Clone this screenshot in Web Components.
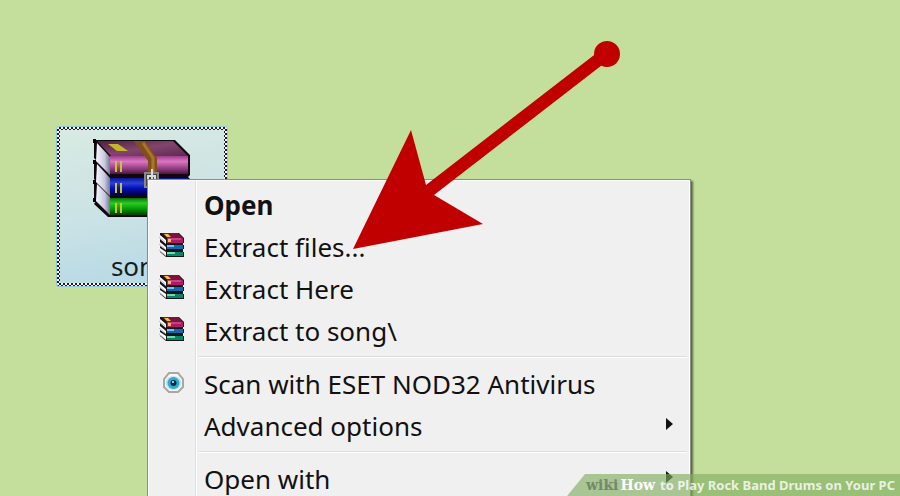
<!DOCTYPE html>
<html lang="en">
<head>
<meta charset="utf-8">
<title>How to Play Rock Band Drums on Your PC</title>
<style>
	html, body{
		height: 100%;
		margin: 0;
	}
	body{
		overflow: hidden;
		background: #c4df9b;
		font-family: "Noto Sans", "Open Sans", sans-serif;
	}
</style>
</head>
<body>

<desk-top>
	<desktop-icon name="song"></desktop-icon>

	<context-menu>
		<menu-entry default>Open</menu-entry>
		<menu-entry icon="books">Extract files...</menu-entry>
		<menu-entry icon="books">Extract Here</menu-entry>
		<menu-entry icon="books">Extract to song\</menu-entry>
		<menu-separator></menu-separator>
		<menu-entry icon="eye">Scan with ESET NOD32 Antivirus</menu-entry>
		<menu-entry submenu>Advanced options</menu-entry>
		<menu-separator></menu-separator>
		<menu-entry submenu>Open with</menu-entry>
	</context-menu>

	<pointer-arrow></pointer-arrow>

	<title-strip>
		<span slot="brand">wiki</span>
		<span slot="how">How</span>
		to Play Rock Band Drums on Your PC
	</title-strip>
</desk-top>

<script>
(function(d){

	const makeTemplate = html => {
		const template = d.createElement('template');
		template.innerHTML = html;
		return template;
	};

	const attach = (element, template) => {
		element.attachShadow({ mode: 'open' });
		element.shadowRoot.appendChild(template.content.cloneNode(true));
	};

	//////////////////////
	// desktop

	const desktopTemplate = makeTemplate(`
	<style>
		:host{
			display: block;
			position: relative;
			height: 100%;
			overflow: hidden;
		}
	</style>
	<slot></slot>
	`);

	class DeskTop extends HTMLElement{
		constructor(){
			super();
			attach(this, desktopTemplate);
		}
	}

	//////////////////////
	// selected archive on the desktop

	const iconTemplate = makeTemplate(`
	<style>
		:host{
			display: block;
			position: absolute;
			left: 56px;
			top: 126px;
			width: 172px;
		}
		.tile{
			display: block;
			box-sizing: border-box;
			width: 100%;
			padding: 3px;
			border: 1px solid #9cc3dc;
			border-radius: 3px;
			background: repeating-conic-gradient(#1c1c24 0 25%, #f4f8fa 0 50%) 0 0 / 4px 4px;
			font: inherit;
			color: #111c24;
		}
		.inner{
			display: flex;
			flex-direction: column;
			align-items: center;
			gap: 30px;
			padding: 9px 2px 0 0;
			background: linear-gradient(170deg, #d8eae2, #cbe3e5 50%, #b4d7e6);
		}
		svg{
			display: block;
			width: 100px;
			height: 80px;
		}
		.name{
			font-size: 26px;
			line-height: 34px;
		}
	</style>
	<button class="tile" type="button">
		<span class="inner">
			<svg viewBox="0 0 100 80" aria-hidden="true">
				<defs>
					<linearGradient id="plum" x2="0" y2="1"><stop offset="0" stop-color="#a03c8c"/><stop offset=".3" stop-color="#d878c0"/><stop offset=".6" stop-color="#a54a92"/><stop offset="1" stop-color="#4a1740"/></linearGradient>
					<linearGradient id="blue" x2="0" y2="1"><stop offset="0" stop-color="#0a1690"/><stop offset=".3" stop-color="#2a42dc"/><stop offset=".6" stop-color="#0510b4"/><stop offset="1" stop-color="#000048"/></linearGradient>
					<linearGradient id="green" x2="0" y2="1"><stop offset="0" stop-color="#067006"/><stop offset=".3" stop-color="#30c828"/><stop offset=".6" stop-color="#04a404"/><stop offset="1" stop-color="#023c02"/></linearGradient>
					<linearGradient id="paper"><stop offset="0" stop-color="#f8f8ff"/><stop offset=".6" stop-color="#c9c9e0"/><stop offset="1" stop-color="#77778e"/></linearGradient>
					<linearGradient id="cover" x2="1" y2="1"><stop offset="0" stop-color="#4d203f"/><stop offset=".5" stop-color="#82456d"/><stop offset="1" stop-color="#5d2950"/></linearGradient>
				</defs>
				<path d="M3 1H84L99 16V36L97 38L99 40V78H17L3 65L5 62L3 60V45L5 42L3 40V24L5 21L3 19Z" fill="#11070f"/>
				<path d="M6 4 19 18V36L5 22Z" fill="url(#paper)"/>
				<path d="M6 25 19 39V57L5 43Z" fill="url(#paper)"/>
				<path d="M6 45 19 58V76L5 62Z" fill="url(#paper)"/>
				<path d="M6 2H82L97 17H20Z" fill="url(#cover)"/>
				<path d="M19 17H97V35H19Z" fill="url(#plum)"/>
				<path d="M19 39H97V56H19Z" fill="url(#blue)"/>
				<path d="M19 59H97V76H19Z" fill="url(#green)"/>
				<path d="M17 5H27L37 12H26Z" fill="#c5b52b"/>
				<path d="M43 2H54L66 19V36H57V22Z" fill="#80501b"/>
				<path d="M52 4 62 19V34" fill="none" stroke="#a8752c" stroke-width="3"/>
				<path d="M25 22V33M30 22V33M25 44V54M30 44V54M25 64V74M30 64V74" stroke="#ccc42b" stroke-width="2"/>
				<path d="M54 34H67V48H54Z" fill="#444" stroke="#888" stroke-width="2"/>
				<path d="M57 47V37H64V47M61 30V40" fill="none" stroke="#ddd" stroke-width="2"/>
				<path d="M2 2H5M2 23H5M2 43H5M2 61H5" stroke="#000" stroke-width="4"/>
			</svg>
			<span class="name"></span>
		</span>
	</button>
	`);

	class DesktopIcon extends HTMLElement{
		constructor(){
			super();
			attach(this, iconTemplate);
		}

		connectedCallback(){
			this.shadowRoot.querySelector('.name').textContent = this.getAttribute('name');
		}
	}

	//////////////////////
	// context menu

	const menuTemplate = makeTemplate(`
	<style>
		:host{
			display: block;
			position: absolute;
			left: 147px;
			right: 209px;
			top: 179px;
			box-sizing: border-box;
			padding: 5px 3px 8px 1px;
			border: 1px solid #8b8d8a;
			background: linear-gradient(90deg, transparent 47px, #dedede 47px 48px, #fff 48px 49px, transparent 49px) #f0f0f0;
			box-shadow: inset 1px 1px #fafafa, inset -1px 0 #fff, 2px 2px 2px #55683f;
		}
	</style>
	<div role="menu"><slot></slot></div>
	`);

	class ContextMenu extends HTMLElement{
		constructor(){
			super();
			attach(this, menuTemplate);
		}
	}

	const icons = {
		books: `
		<svg viewBox="0 0 26 26" aria-hidden="true">
			<path d="M1 1H20L25 6V25H7L1 20Z" fill="#18151a"/>
			<path d="M1 3 7 8V12L1 7ZM1 10 7 15V18L1 14ZM1 16 7 20V24L1 19Z" fill="#fff"/>
			<path d="M0 5 6 10M0 12 6 17M0 18 6 23" stroke="#bbb"/>
			<path d="M3 1H19L24 6H8Z" fill="#7c123e"/>
			<path d="M8 6H24V11H8Z" fill="#ad1a66"/>
			<path d="M9 7H22" stroke="#e068a4"/>
			<path d="M8 13H24V17H8Z" fill="#1267ae"/>
			<path d="M8 14H15" stroke="#70c7e9" stroke-width="2"/>
			<path d="M8 20H24V24H8Z" fill="#078564"/>
			<path d="M8 21H16" stroke="#68ddb0" stroke-width="2"/>
			<path d="M5 2H9L12 5H8ZM9 7H12V10H9Z" fill="#f1c543"/>
			<path d="M24 11H26V13H24ZM24 17H26V20H24Z" fill="#f0f0f0"/>
		</svg>`,
		eye: `
		<svg viewBox="0 0 26 26" aria-hidden="true">
			<path d="M10 4H19L24 10V18L19 23H10L5 18V10Z" fill="#f8f8f8" stroke="#aaa6a3" stroke-width="2"/>
			<ellipse cx="14.500" cy="14" rx="8" ry="7" fill="#b7e8f2"/>
			<circle cx="14.500" cy="14" r="6" fill="#36a9ca"/>
			<circle cx="14.500" cy="14" r="3" fill="#092d48"/>
			<circle cx="14" cy="13" r="1" fill="#cfefff"/>
		</svg>`
	};

	const entryTemplate = makeTemplate(`
	<style>
		:host{
			display: block;
		}
		button{
			display: flex;
			align-items: center;
			width: 100%;
			height: 42px;
			padding: 0 14px 2px 10px;
			border: 0;
			background: none;
			font: inherit;
			font-size: 26px;
			line-height: 30px;
			color: #111;
			text-align: left;
			white-space: nowrap;
		}
		:host([default]) button{
			font-weight: bold;
		}
		.icon{
			flex: none;
			width: 45px;
		}
		.icon svg{
			display: block;
			width: 26px;
			height: 26px;
			margin-bottom: 4px;
		}
		.label{
			flex: 1;
		}
		.more{
			display: none;
			width: 7px;
			height: 12px;
			margin-bottom: 4px;
		}
		:host([submenu]) .more{
			display: block;
		}
	</style>
	<button type="button" role="menuitem">
		<span class="icon"></span>
		<span class="label"><slot></slot></span>
		<svg class="more" viewBox="0 0 7 12" aria-hidden="true"><path d="M0 0 7 6 0 12Z" fill="#111"/></svg>
	</button>
	`);

	class MenuEntry extends HTMLElement{
		constructor(){
			super();
			attach(this, entryTemplate);
		}

		connectedCallback(){
			this.shadowRoot.querySelector('.icon').innerHTML = icons[this.getAttribute('icon')] || '';
			if(this.hasAttribute('submenu')){
				this.shadowRoot.querySelector('button').setAttribute('aria-haspopup', 'menu');
			}
		}
	}

	const separatorTemplate = makeTemplate(`
	<style>
		:host{
			display: block;
			padding: 3px 0 6px 49px;
		}
		hr{
			margin: 0;
			border: 0;
			border-top: 1px solid #dcdcdc;
			border-bottom: 1px solid #fff;
		}
	</style>
	<hr>
	`);

	class MenuSeparator extends HTMLElement{
		constructor(){
			super();
			attach(this, separatorTemplate);
		}
	}

	//////////////////////
	// red arrow over the menu

	const arrowTemplate = makeTemplate(`
	<style>
		:host{
			display: block;
			position: absolute;
			left: 352px;
			top: 40px;
			pointer-events: none;
		}
		svg{
			display: block;
			width: 270px;
			height: 210px;
		}
	</style>
	<svg viewBox="0 0 270 210" aria-hidden="true">
		<g fill="#c00000">
			<circle cx="255" cy="14" r="13"/>
			<path d="M1 209 59 90 74 145 246 12 254 22 82 155 131 184Z"/>
		</g>
	</svg>
	`);

	class PointerArrow extends HTMLElement{
		constructor(){
			super();
			attach(this, arrowTemplate);
		}
	}

	//////////////////////
	// caption in the lower right corner

	const stripTemplate = makeTemplate(`
	<style>
		:host{
			display: block;
			position: absolute;
			right: 0;
			bottom: 0;
			padding: 0 5px 0 19px;
			background: rgba(132, 173, 98, .65);
			clip-path: polygon(18px 0, 100% 0, 100% 100%, 0 100%);
			font: bold 13px/22px "Noto Sans", sans-serif;
			color: rgba(255, 255, 255, .8);
			white-space: nowrap;
		}
		p{
			display: flex;
			align-items: baseline;
			margin: 0;
		}
		.brand, .how{
			font-family: "DejaVu Serif", serif;
			font-size: 14px;
		}
		.brand{
			color: #74886a;
		}
		.how{
			margin: 0 5px 0 2px;
			color: #fff;
		}
	</style>
	<p>
		<span class="brand"><slot name="brand"></slot></span>
		<span class="how"><slot name="how"></slot></span>
		<span><slot></slot></span>
	</p>
	`);

	class TitleStrip extends HTMLElement{
		constructor(){
			super();
			attach(this, stripTemplate);
		}
	}

	window.customElements.define('desk-top', DeskTop);
	window.customElements.define('desktop-icon', DesktopIcon);
	window.customElements.define('context-menu', ContextMenu);
	window.customElements.define('menu-entry', MenuEntry);
	window.customElements.define('menu-separator', MenuSeparator);
	window.customElements.define('pointer-arrow', PointerArrow);
	window.customElements.define('title-strip', TitleStrip);

})(document);
</script>
</body>
</html>
